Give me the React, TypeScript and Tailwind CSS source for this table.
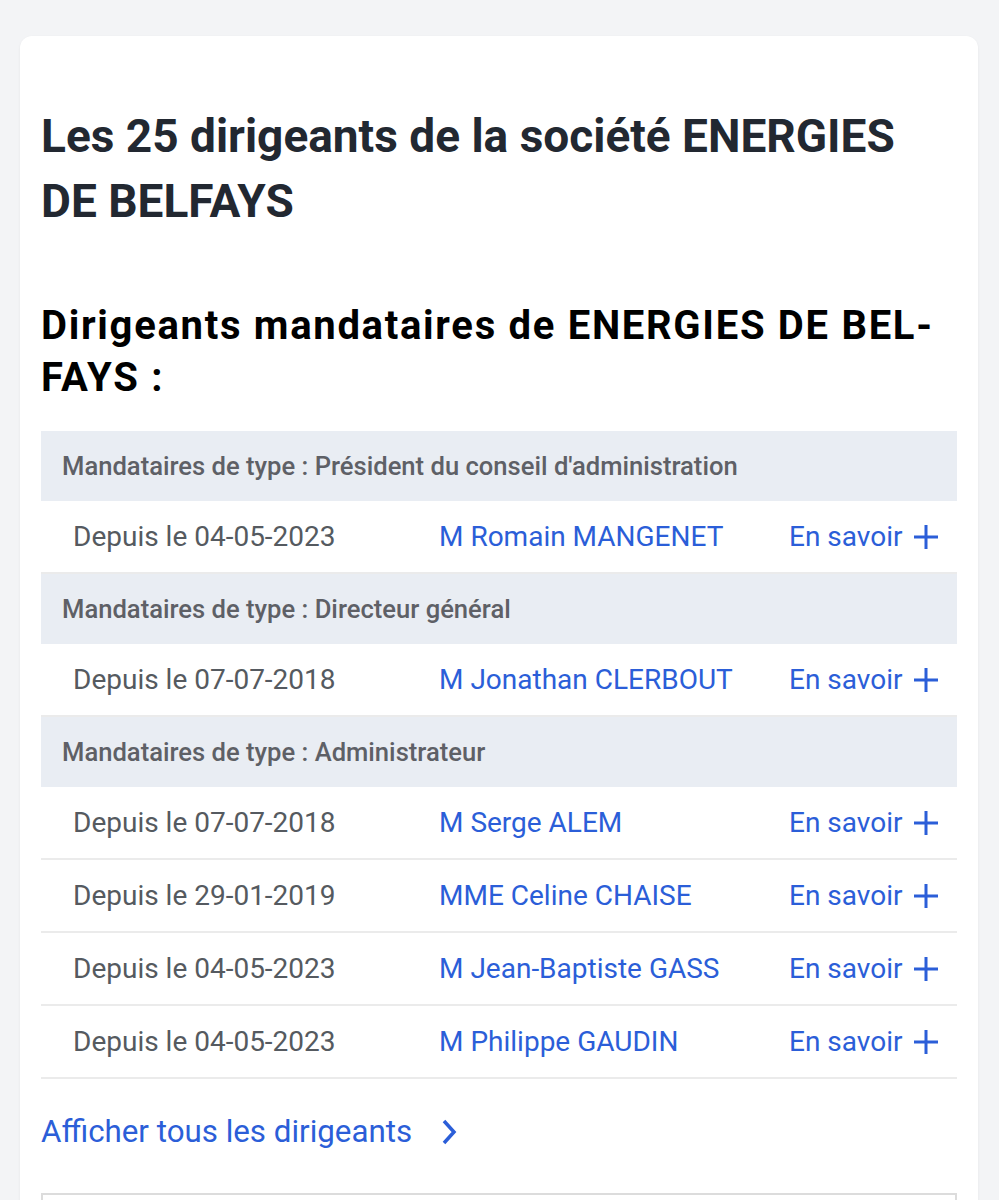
import React from "react";

type Row = { date: string; name: string };
type Group = { type: string; rows: Row[] };

const groups: Group[] = [
  { type: "Président du conseil d'administration", rows: [{ date: "04-05-2023", name: "M Romain MANGENET" }] },
  { type: "Directeur général", rows: [{ date: "07-07-2018", name: "M Jonathan CLERBOUT" }] },
  {
    type: "Administrateur",
    rows: [
      { date: "07-07-2018", name: "M Serge ALEM" },
      { date: "29-01-2019", name: "MME Celine CHAISE" },
      { date: "04-05-2023", name: "M Jean-Baptiste GASS" },
      { date: "04-05-2023", name: "M Philippe GAUDIN" },
    ],
  },
];

function Plus() {
  return (
    <svg width="26" height="26" viewBox="0 0 26 26" className="ml-[11px]">
      <path d="M13 1v24M1 13h24" stroke="#2b5ed8" strokeWidth="3" fill="none" />
    </svg>
  );
}

export default function App() {
  return (
    <div className="h-[1200px] overflow-hidden bg-[#f3f4f6] pt-[36px] pl-[20px] pr-[21px]" style={{ fontFamily: "Roboto, 'Noto Sans', sans-serif" }}>
      <div className="bg-white rounded-[12px] shadow-[0_1px_3px_rgba(0,0,0,0.06)] px-[21px] pt-[68px] pb-[40px]">
        <h1 className="text-[46px] leading-[65px] font-bold text-[#222831]">
          Les 25 dirigeants de la société ENERGIES DE BELFAYS
        </h1>
        <h2 className="mt-[66px] text-[40px] leading-[52px] font-bold text-black tracking-[1.7px]">
          Dirigeants mandataires de ENERGIES DE BEL{"\u00AD"}FAYS :
        </h2>
        <div className="mt-[27px]">
          {groups.map((g) => (
            <div key={g.type}>
              <div className="h-[70px] bg-[#e9edf3] flex items-center pl-[21px] text-[25.6px] font-medium text-[#5e6066]">
                Mandataires de type : {g.type}
              </div>
              {g.rows.map((r, i) => (
                <div key={i} className="h-[73px] flex items-center text-[28px] border-b-2 border-[#ebebeb]">
                  <div className="w-[398px] pl-[32px] text-[#555a60]">Depuis le {r.date}</div>
                  <div className="w-[350px] text-[#2b5ed8]">{r.name}</div>
                  <div className="flex items-center text-[#2b5ed8]">
                    En savoir
                    <Plus />
                  </div>
                </div>
              ))}
            </div>
          ))}
        </div>
        <div className="mt-[35px] flex items-center text-[31.3px] leading-[36px] text-[#2b5ed8]">
          Afficher tous les dirigeants
          <svg width="22" height="30" viewBox="0 0 22 30" className="ml-[26px]">
            <path d="M6 4l10 11-10 11" stroke="#2b5ed8" strokeWidth="3.5" fill="none" />
          </svg>
        </div>
        <div className="mt-[43px] h-[60px] border-2 border-[#dcdcdc]"></div>
      </div>
    </div>
  );
}
